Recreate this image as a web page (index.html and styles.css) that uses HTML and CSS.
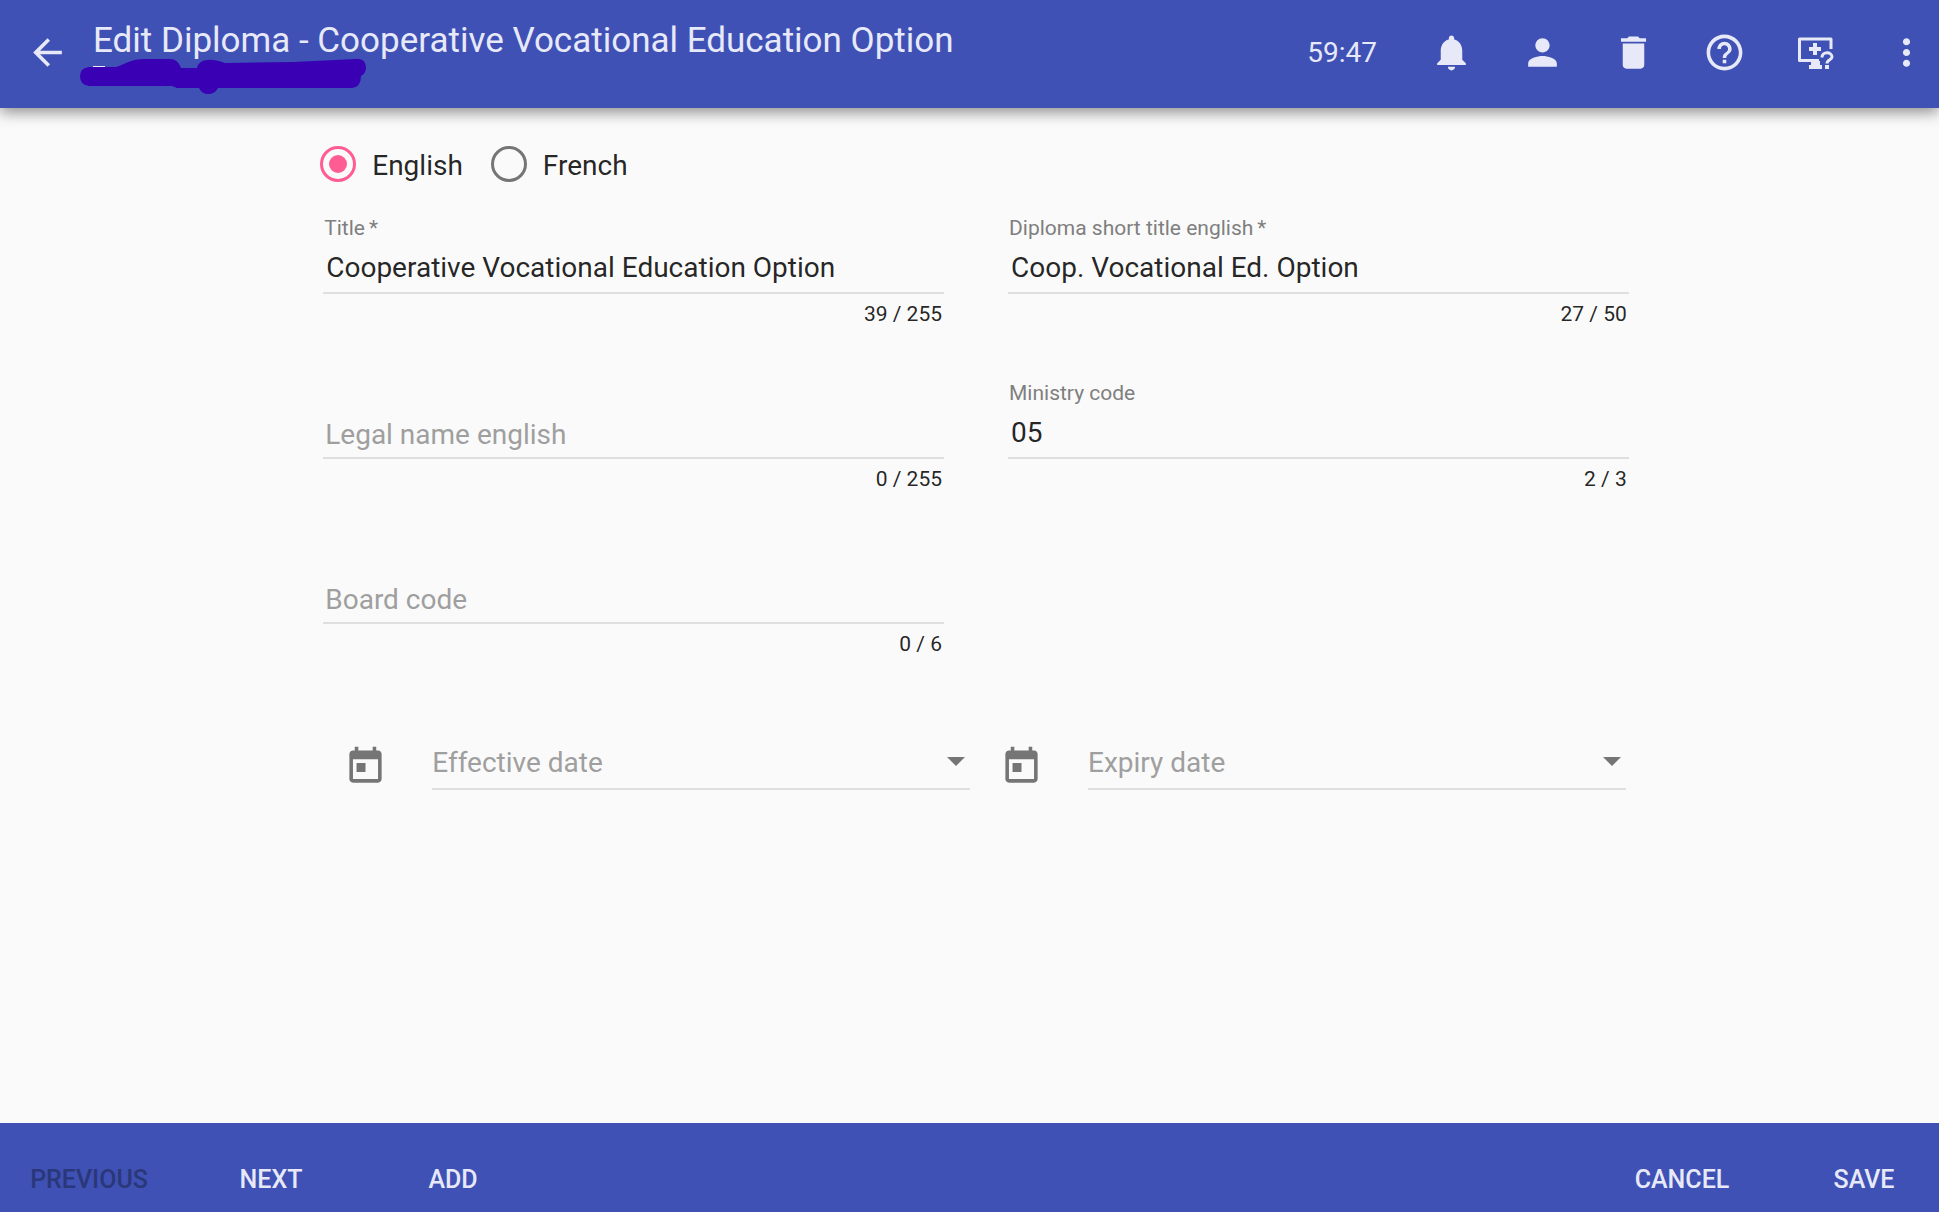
FILE: index.html
```html
<!DOCTYPE html>
<html lang="en">
<head>
<meta charset="utf-8">
<meta name="viewport" content="width=device-width, initial-scale=1">
<title>Edit Diploma</title>
<link rel="stylesheet" href="styles.css">
</head>
<body>
<header class="toolbar">
  <button class="icon-button" type="button" aria-label="Back">
    <svg class="icon" viewBox="0 0 24 24"><path d="M20 11H7.83l5.59-5.59L12 4l-8 8 8 8 1.41-1.41L7.83 13H20v-2z"/></svg>
  </button>
  <div class="heading">
    <h1 class="title">Edit Diploma - Cooperative Vocational Education Option</h1>
    <svg class="scribble" viewBox="0 0 290 40" aria-hidden="true">
      <path class="scribble-edge" d="M13 9h12"/>
      <path class="scribble-ink" d="M9 9H36C46 6 50 1 66 1H90Q98 1 101 10H117Q119 2 128 2Q133 1 145 5L213 4L276 1Q286 0 286 10Q286 15 281 18Q281 29 272 30H138Q135 36 128 36Q122 36 119 30H97L92 28H9Q0 27 0 18Q0 10 9 9Z"/>
    </svg>
  </div>
  <span class="timer">59:47</span>
  <nav class="actions" aria-label="Page actions">
    <button class="icon-button" type="button" aria-label="Notifications">
      <svg class="icon" viewBox="0 0 24 24"><path d="M12 22c1.100 0 2-.9 2-2h-4c0 1.100.890 2 2 2zm6-6v-5c0-3.070-1.640-5.640-4.500-6.320V4c0-.83-.67-1.500-1.500-1.500s-1.500.67-1.500 1.500v.68C7.630 5.360 6 7.920 6 11v5l-2 2v1h16v-1l-2-2z"/></svg>
    </button>
    <button class="icon-button" type="button" aria-label="Account">
      <svg class="icon" viewBox="0 0 24 24"><path d="M12 12c2.21 0 4-1.79 4-4s-1.79-4-4-4-4 1.79-4 4 1.79 4 4 4zm0 2c-2.67 0-8 1.34-8 4v2h16v-2c0-2.66-5.33-4-8-4z"/></svg>
    </button>
    <button class="icon-button" type="button" aria-label="Delete">
      <svg class="icon" viewBox="0 0 24 24"><path d="M6 19c0 1.100.9 2 2 2h8c1.100 0 2-.9 2-2V7H6v12zM19 4h-3.500l-1-1h-5l-1 1H5v2h14V4z"/></svg>
    </button>
    <button class="icon-button" type="button" aria-label="Help">
      <svg class="icon" viewBox="0 0 24 24"><path d="M11 18h2v-2h-2v2zm1-16C6.480 2 2 6.480 2 12s4.480 10 10 10 10-4.480 10-10S17.520 2 12 2zm0 18c-4.410 0-8-3.590-8-8s3.590-8 8-8 8 3.590 8 8-3.590 8-8 8zm0-14c-2.210 0-4 1.790-4 4h2c0-1.100.9-2 2-2s2 .9 2 2c0 2-3 1.750-3 5h2c0-2.250 3-2.500 3-5 0-2.210-1.790-4-4-4z"/></svg>
    </button>
    <button class="icon-button" type="button" aria-label="Remote support">
      <svg class="icon" viewBox="0 0 43 43">
        <path class="stroke-wide" d="M37 18V8H5.500V29.500H25"/>
        <path d="M19 12h4v4h4v4h-4v4h-4v-4h-4v-4h4zM17 30h9v4h2v4H15v-4h2zM31 34h4v4h-4z"/>
        <path class="stroke-thin" d="M28 26.500C28 20 38 20.500 38 26C38 29 33 28.500 33 32.500"/>
      </svg>
    </button>
    <button class="icon-button" type="button" aria-label="More options">
      <svg class="icon" viewBox="0 0 24 24"><path d="M12 8c1.100 0 2-.9 2-2s-.9-2-2-2-2 .9-2 2 .9 2 2 2zm0 2c-1.100 0-2 .9-2 2s.9 2 2 2 2-.9 2-2-.9-2-2-2zm0 6c-1.100 0-2 .9-2 2s.9 2 2 2 2-.9 2-2-.9-2-2-2z"/></svg>
    </button>
  </nav>
</header>

<main class="content">
  <form id="diploma" class="form">
    <div class="languages" role="radiogroup" aria-label="Language">
      <label class="radio"><input type="radio" name="language" checked>English</label>
      <label class="radio"><input type="radio" name="language">French</label>
    </div>

    <div class="fields">
      <div class="field">
        <label class="field-label" for="title">Title<span class="required">*</span></label>
        <input class="field-input" id="title" type="text" maxlength="255" value="Cooperative Vocational Education Option">
        <span class="counter">39 / 255</span>
      </div>
      <div class="field">
        <label class="field-label" for="short-title">Diploma short title english<span class="required">*</span></label>
        <input class="field-input" id="short-title" type="text" maxlength="50" value="Coop. Vocational Ed. Option">
        <span class="counter">27 / 50</span>
      </div>
      <div class="field">
        <label class="field-label" for="legal-name"></label>
        <input class="field-input" id="legal-name" type="text" maxlength="255" placeholder="Legal name english" aria-label="Legal name english">
        <span class="counter">0 / 255</span>
      </div>
      <div class="field">
        <label class="field-label" for="ministry-code">Ministry code</label>
        <input class="field-input" id="ministry-code" type="text" maxlength="3" value="05">
        <span class="counter">2 / 3</span>
      </div>
      <div class="field">
        <label class="field-label" for="board-code"></label>
        <input class="field-input" id="board-code" type="text" maxlength="6" placeholder="Board code" aria-label="Board code">
        <span class="counter">0 / 6</span>
      </div>
    </div>

    <div class="dates">
      <div class="date">
        <button class="icon-button calendar" type="button" aria-label="Open effective date calendar">
          <svg class="icon" viewBox="0 0 24 24"><path d="M19 3h-1V1h-2v2H8V1H6v2H5c-1.110 0-1.990.9-1.990 2L3 19c0 1.100.890 2 2 2h14c1.100 0 2-.9 2-2V5c0-1.100-.9-2-2-2zm0 16H5V8h14v11zM7 10h5v5H7z"/></svg>
        </button>
        <div class="date-box">
          <input class="date-input" type="text" placeholder="Effective date" aria-label="Effective date">
          <button class="arrow-button" type="button" aria-label="Choose effective date"><span class="arrow"></span></button>
        </div>
      </div>
      <div class="date">
        <button class="icon-button calendar" type="button" aria-label="Open expiry date calendar">
          <svg class="icon" viewBox="0 0 24 24"><path d="M19 3h-1V1h-2v2H8V1H6v2H5c-1.110 0-1.990.9-1.990 2L3 19c0 1.100.890 2 2 2h14c1.100 0 2-.9 2-2V5c0-1.100-.9-2-2-2zm0 16H5V8h14v11zM7 10h5v5H7z"/></svg>
        </button>
        <div class="date-box">
          <input class="date-input" type="text" placeholder="Expiry date" aria-label="Expiry date">
          <button class="arrow-button" type="button" aria-label="Choose expiry date"><span class="arrow"></span></button>
        </div>
      </div>
    </div>
  </form>
</main>

<footer class="footer">
  <div class="footer-group">
    <button class="text-button" type="button" disabled>PREVIOUS</button>
    <button class="text-button" type="button">NEXT</button>
    <button class="text-button" type="button">ADD</button>
  </div>
  <div class="footer-group">
    <button class="text-button" type="button">CANCEL</button>
    <button class="text-button" type="submit" form="diploma">SAVE</button>
  </div>
</footer>
</body>
</html>
```
FILE: styles.css
```css
* {
  box-sizing: border-box;
}

body {
  margin: 0;
  min-height: 100vh;
  display: flex;
  flex-direction: column;
  background: #fafafa;
  color: rgba(0, 0, 0, 0.87);
  font-family: Roboto, "Liberation Sans", sans-serif;
  font-size: 28px;
}

button,
input {
  font: inherit;
  color: inherit;
}

button {
  padding: 0;
  border: 0;
  background: none;
  cursor: pointer;
}

/* Top toolbar */
.toolbar {
  position: relative;
  display: flex;
  align-items: center;
  height: 108px;
  padding: 0 11px 4px 26px;
  background: #3f51b5;
  color: #e7e9f8;
  box-shadow: 0 4px 14px rgba(0, 0, 0, 0.45);
}

.icon-button {
  display: block;
  flex: none;
}

.icon {
  display: block;
  width: 43px;
  height: 43px;
  fill: currentColor;
}

.stroke-wide,
.stroke-thin {
  fill: none;
  stroke: currentColor;
  stroke-width: 3;
  stroke-linejoin: round;
}

.heading {
  position: relative;
  flex: 1;
  align-self: flex-start;
  padding: 18px 0 0 24px;
}

.title {
  margin: 0;
  font-size: 35px;
  font-weight: 400;
  line-height: 46px;
  white-space: nowrap;
}

.scribble {
  position: absolute;
  top: 58px;
  left: 11px;
  width: 290px;
  height: 40px;
}

.scribble-ink {
  fill: #3a00b4;
}

.scribble-edge {
  stroke: currentColor;
  stroke-width: 2;
}

.timer {
  margin-right: 53px;
}

.actions {
  display: flex;
  gap: 48px;
}

/* Form */
.content {
  flex: 1;
  padding: 38px 16%;
}

.languages {
  display: flex;
  gap: 28px;
  padding-left: 10px;
  margin-bottom: 30px;
}

.radio {
  display: flex;
  align-items: flex-start;
  gap: 16px;
  line-height: 40px;
}

.radio input {
  appearance: none;
  display: grid;
  place-items: center;
  width: 36px;
  height: 36px;
  margin: 0;
  border: 3px solid #757575;
  border-radius: 50%;
}

.radio input:checked {
  border-color: #ff5c93;
}

.radio input:checked::before {
  content: "";
  width: 18px;
  height: 18px;
  border-radius: 50%;
  background: #ff5c93;
}

.fields {
  display: grid;
  grid-template-columns: 1fr 1fr;
  gap: 55px 64px;
  padding-left: 13px;
}

.field {
  display: flex;
  flex-direction: column;
}

.field-label {
  height: 24px;
  padding-left: 1px;
  color: #7f7f7f;
  font-size: 21px;
  line-height: 24px;
}

.required {
  padding-left: 4px;
}

.field-input {
  width: 100%;
  height: 54px;
  padding: 2px 3px 0;
  border: 0;
  border-bottom: 2px solid #dfdfdf;
  background: none;
}

.field-input:placeholder-shown {
  padding: 6px 2px 0;
}

::placeholder {
  color: #9f9f9f;
  opacity: 1;
}

.counter {
  padding: 8px 2px 0 0;
  font-size: 21px;
  line-height: 24px;
  text-align: right;
}

.dates {
  display: grid;
  grid-template-columns: 1fr 1fr;
  gap: 30px;
  padding: 0 3px 0 34px;
  margin-top: 82px;
}

.date {
  display: flex;
  align-items: center;
  gap: 45px;
}

.calendar {
  padding-top: 4px;
  color: #757575;
}

.date-box {
  display: flex;
  flex: 1;
  height: 52px;
  padding-bottom: 4px;
  border-bottom: 2px solid #dfdfdf;
}

.date-input {
  flex: 1;
  min-width: 0;
  padding: 2px 0 0;
  border: 0;
  background: none;
}

.arrow-button {
  display: flex;
  align-items: center;
  padding: 0 5px;
}

.arrow {
  border: 9px solid transparent;
  border-top-color: #757575;
  border-bottom: 0;
}

/* Bottom bar */
.footer {
  display: flex;
  justify-content: space-between;
  height: 89px;
  padding: 24px 0 0 14px;
  background: #3f51b5;
}

.footer-group {
  display: flex;
  gap: 32px;
}

.text-button {
  width: 150px;
  color: #e7e9f8;
  font-size: 25px;
  font-weight: 500;
}

.text-button:disabled {
  color: #2a3778;
}
```
